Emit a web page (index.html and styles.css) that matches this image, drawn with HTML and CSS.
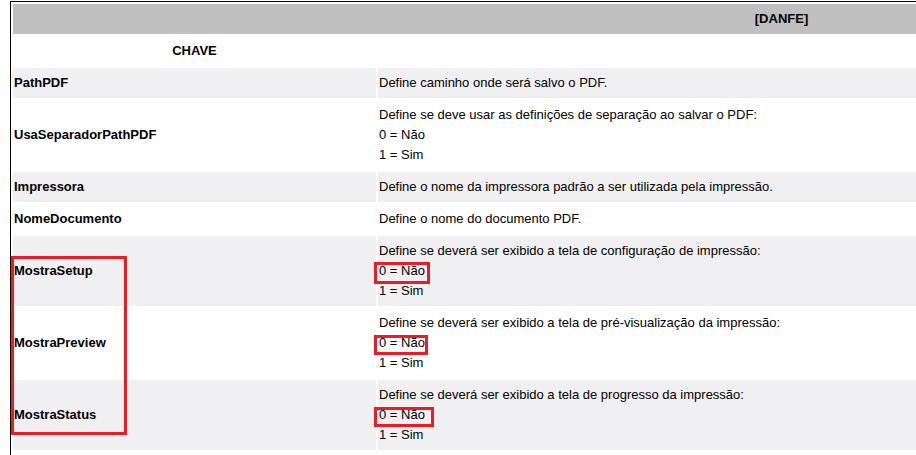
FILE: index.html
```html
<!DOCTYPE html>
<html lang="pt-BR">
<head>
<meta charset="utf-8">
<title>DANFE</title>
<link rel="stylesheet" href="styles.css">
</head>
<body>
<div class="frame">
  <table class="conf">
    <colgroup>
      <col class="c-key">
      <col class="c-desc">
    </colgroup>
    <tr class="head">
      <th colspan="2">[DANFE]</th>
    </tr>
    <tr class="cols">
      <th class="key-col">CHAVE</th>
      <th class="desc-col"></th>
    </tr>
    <tr class="odd">
      <td class="key">PathPDF</td>
      <td class="desc">Define caminho onde será salvo o PDF.</td>
    </tr>
    <tr class="even">
      <td class="key">UsaSeparadorPathPDF</td>
      <td class="desc"><span class="ln">Define se deve usar as definições de separação ao salvar o PDF:</span><span class="ln">0 = Não</span><span class="ln">1 = Sim</span></td>
    </tr>
    <tr class="odd">
      <td class="key">Impressora</td>
      <td class="desc">Define o nome da impressora padrão a ser utilizada pela impressão.</td>
    </tr>
    <tr class="even">
      <td class="key">NomeDocumento</td>
      <td class="desc">Define o nome do documento PDF.</td>
    </tr>
    <tr class="odd">
      <td class="key">MostraSetup</td>
      <td class="desc"><span class="ln">Define se deverá ser exibido a tela de configuração de impressão:</span><span class="ln"><span class="hl hl-a">0 = Não</span></span><span class="ln">1 = Sim</span></td>
    </tr>
    <tr class="even">
      <td class="key">MostraPreview</td>
      <td class="desc"><span class="ln">Define se deverá ser exibido a tela de pré-visualização da impressão:</span><span class="ln"><span class="hl hl-b">0 = Não</span></span><span class="ln">1 = Sim</span></td>
    </tr>
    <tr class="odd">
      <td class="key">MostraStatus</td>
      <td class="desc"><span class="ln">Define se deverá ser exibido a tela de progresso da impressão:</span><span class="ln"><span class="hl hl-c">0 = Não</span></span><span class="ln">1 = Sim</span></td>
    </tr>
  </table>
  <div class="mark-keys"></div>
</div>
</body>
</html>
```
FILE: styles.css
```css
html, body {
  margin: 0;
  padding: 0;
  background: #ffffff;
  overflow: hidden;
}

body {
  font-family: "Liberation Sans", Arial, sans-serif;
  font-size: 13px;
  color: #000000;
}

.frame {
  position: relative;
  margin: 1px 0 0 10px;
  border-top: 1px solid #000000;
  border-left: 1px solid #000000;
  overflow: hidden;
  height: 460px;
}

.conf {
  border-collapse: separate;
  border-spacing: 2px;
  width: 1541px;
  table-layout: fixed;
}

.c-key {
  width: 363px;
}

.conf th,
.conf td {
  padding: 5px 1px;
  line-height: 20px;
  vertical-align: middle;
  text-align: left;
}

.head th {
  background: #c0c0c0;
  text-align: center;
  font-weight: bold;
}

.cols th {
  background: #ffffff;
  font-weight: bold;
}

.cols .key-col {
  text-align: center;
}

.odd td {
  background: #f0eff2;
}

.even td {
  background: #ffffff;
}

.key {
  font-weight: bold;
}

.ln {
  display: block;
}

.hl {
  position: relative;
  display: inline-block;
}

.hl::after {
  content: "";
  position: absolute;
  left: -5px;
  right: -5px;
  top: 1px;
  bottom: -3px;
  border: 3px solid #ed1c24;
}

.hl-b::after {
  right: -3px;
  top: 2px;
  bottom: -2px;
}

.hl-c::after {
  right: -9px;
  top: 2px;
  bottom: -2px;
}

.mark-keys {
  position: absolute;
  left: 0;
  top: 254px;
  width: 110px;
  height: 173px;
  border: 3px solid #ed1c24;
}
```
